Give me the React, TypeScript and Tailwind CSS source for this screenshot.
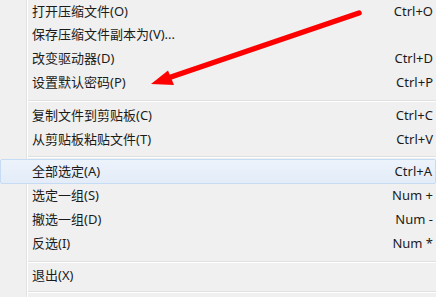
const font = { fontFamily: '"Noto Sans", "Noto Sans CJK SC", sans-serif' };

type Item = { label: string; shortcut?: string; h?: string; active?: boolean };

function Gutter() {
  return (
    <div className="flex shrink-0 self-stretch">
      <div className="w-[26px]" />
      <div className="w-px bg-[#e2e3e3]" />
      <div className="w-px bg-white" />
    </div>
  );
}

function Row({ label, shortcut, h = 'h-6', active }: Item) {
  if (active) {
    return (
      <div className={`flex ${h} items-center rounded-[2px] border border-[#c6dbf4] bg-gradient-to-b from-[#edf3fb] to-[#e3ecf8] pl-[31px] pr-[3px]`}>
        <span className="flex-1">{label}</span>
        <span>{shortcut}</span>
      </div>
    );
  }
  return (
    <div className={`flex ${h}`}>
      <Gutter />
      <div className="flex flex-1 items-center pl-[4px] pr-[3px]">
        <span className="flex-1">{label}</span>
        {shortcut && <span>{shortcut}</span>}
      </div>
    </div>
  );
}

function Separator({ top, bottom }: { top: string; bottom: string }) {
  return (
    <div className="flex">
      <Gutter />
      <div className="flex-1">
        <div className={top} />
        <div className="h-px bg-[#e0e0e0]" />
        <div className="h-px bg-white" />
        <div className={bottom} />
      </div>
    </div>
  );
}

export default function App() {
  return (
    <div
      className="relative h-[297px] w-[436px] overflow-hidden bg-[#f0f0f0] text-[13px] text-[#1b1b1b]"
      style={font}
    >
      <Row label="打开压缩文件(O)" shortcut="Ctrl+O" h="h-[23px]" />
      <Row label="保存压缩文件副本为(V)..." />
      <Row label="改变驱动器(D)" shortcut="Ctrl+D" />
      <Row label="设置默认密码(P)" shortcut="Ctrl+P" />
      <Separator top="h-[5px]" bottom="h-[2px]" />
      <Row label="复制文件到剪贴板(C)" shortcut="Ctrl+C" />
      <Row label="从剪贴板粘贴文件(T)" shortcut="Ctrl+V" />
      <Separator top="h-[4px]" bottom="h-px" />
      <Row label="全部选定(A)" shortcut="Ctrl+A" h="h-[25px]" active />
      <Row label="选定一组(S)" shortcut="Num +" />
      <Row label="撤选一组(D)" shortcut="Num -" />
      <Row label="反选(I)" shortcut="Num *" />
      <Separator top="h-[5px]" bottom="h-px" />
      <Row label="退出(X)" />
      <Separator top="h-[3px]" bottom="h-[6px]" />

      {/* red annotation arrow */}
      <svg className="absolute inset-0" width="436" height="297" viewBox="0 0 436 297">
        <line x1="359" y1="13" x2="168" y2="78" stroke="#ff0000" strokeWidth="5.5" strokeLinecap="round" />
        <polygon points="151,84 168,70.5 174,85" fill="#ff0000" />
      </svg>
    </div>
  );
}
